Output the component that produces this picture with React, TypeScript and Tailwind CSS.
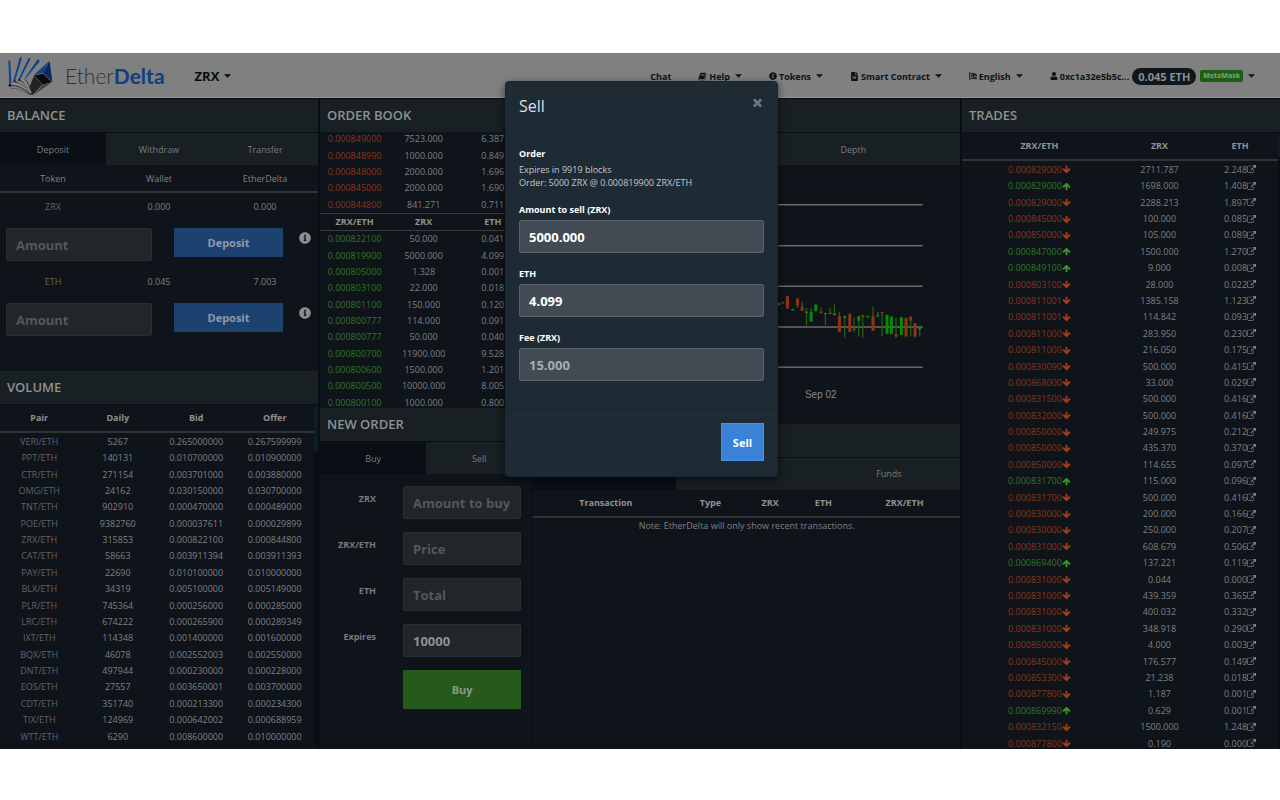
import { FaFileAlt, FaInfoCircle, FaUser } from "react-icons/fa";

type IconProps = { d: string; className?: string };
function Icon({ d, className = "" }: IconProps) {
  return (
    <svg viewBox="0 0 1792 1792" className={`inline-block fill-current ${className}`} aria-hidden="true">
      <path d={d} />
    </svg>
  );
}

const ARROW =
  "M1675 832q0 53-37 90l-651 652q-39 37-91 37-53 0-90-37l-651-652q-38-36-38-90 0-53 38-91l74-75q39-37 91-37 53 0 90 37l294 294v-704q0-52 38-90t90-38h128q52 0 90 38t38 90v704l294-294q37-37 90-37 52 0 91 37l75 75q37 39 37 91z";
const EXTERNAL =
  "M1408 928v320q0 119-84.5 203.5t-203.5 84.5h-832q-119 0-203.5-84.5t-84.5-203.5v-832q0-119 84.5-203.5t203.5-84.5h704q14 0 23 9t9 23v64q0 14-9 23t-23 9h-704q-66 0-113 47t-47 113v832q0 66 47 113t113 47h832q66 0 113-47t47-113v-320q0-14 9-23t23-9h64q14 0 23 9t9 23zM1792 64v512q0 26-19 45t-45 19-45-19l-176-176-652 652q-10 10-23 10t-23-10l-114-114q-10-10-10-23t10-23l652-652-176-176q-19-19-19-45t19-45 45-19h512q26 0 45 19t19 45z";
const TIMES =
  "M1490 1322q0 40-28 68l-136 136q-28 28-68 28t-68-28l-294-294-294 294q-28 28-68 28t-68-28l-136-136q-28-28-28-68t28-68l294-294-294-294q-28-28-28-68t28-68l136-136q28-28 68-28t68 28l294 294 294-294q28-28 68-28t68 28l136 136q28 28 28 68t-28 68l-294 294 294 294q28 28 28 68z";
const BOOK =
  "M1703 478q40 57 18 129l-275 906q-19 64-76.5 107.5t-122.5 43.5h-923q-77 0-148.5-53.5t-99.5-131.5q-24-67-2-127 0-4 3-27t4-37q1-8-3-21.5t-3-19.5q2-11 8-21t16.5-23.5 16.5-23.5q23-38 45-91.5t30-91.5q3-10 .5-30t-.5-28q3-11 17-28t17-23q21-36 42-92t25-90q1-9-2.5-32t.5-28q4-13 22-30.5t22-22.5q19-26 42.5-84.5t27.5-96.5q1-8-3-25.5t-2-26.5q2-8 9-18t18-23 17-21q8-12 16.5-30.5t15-35 16-36 19.5-32 26.5-23.5 36-11.5 47.5 5.5l-1 3q38-9 51-9h761q74 0 114 56t18 130l-274 906q-36 119-71.5 153.5t-128.5 34.5h-869q-27 0-38 15-11 16-1 43 24 70 144 70h923q29 0 56-15.5t35-41.5l300-987q7-22 5-57 38 15 59 43zm-1064 2q-4 13 2 22.5t20 9.5h608q13 0 25.5-9.5t16.5-22.5l21-64q4-13-2-22.5t-20-9.5h-608q-13 0-25.5 9.5t-16.5 22.5zm-83 256q-4 13 2 22.5t20 9.5h608q13 0 25.5-9.5t16.5-22.5l21-64q4-13-2-22.5t-20-9.5h-608q-13 0-25.5 9.5t-16.5 22.5z";

function Caret() {
  return (
    <svg viewBox="0 0 8 4" className="ml-[5px] h-1 w-[7px] fill-current" aria-hidden="true">
      <path d="M0 0h8L4 4z" />
    </svg>
  );
}

function LanguageIcon() {
  return (
    <svg viewBox="0 0 20 20" className="mr-[2px] size-2" aria-hidden="true">
      <path d="M1 2l9 3v11l-9 2z" fill="none" stroke="currentColor" strokeWidth="2" />
      <path d="M3 8h5M5.500 6v2M7.500 8q-1 5-4 6M4 10q1 3 4 3" fill="none" stroke="currentColor" strokeWidth="1.400" />
      <path d="M8 2l11 3v14l-9-3V5z" fill="currentColor" />
      <path d="M12 14l2.500-7 2.500 8M13 12l3 .6" fill="none" stroke="#808080" strokeWidth="1.500" />
    </svg>
  );
}

function Logo() {
  return (
    <svg viewBox="0 0 135 117" className="h-[39px] w-[45px]" aria-hidden="true">
      <g fill="#0d4290">
        <path d="M1 9l6 5 3 62-6 8z" />
        <path d="M36 0l6 3-20 65-7 6z" />
        <path d="M62 2l6 3-31 60-7 5z" />
        <path d="M89 7l7 5-40 49-7 5z" />
        <path d="M124 12L78 53l28-5z" />
      </g>
      <path d="M125 12l8 63-27-27z" fill="#08295c" />
      <path d="M78 55l28-5 25 25-27 8z" fill="#0a0b0d" />
      <path d="M78 56l25 27-29 31-10-22z" fill="#232325" />
      <path d="M105 84l26-8-54 38z" fill="#3d3d40" />
      <g fill="none" strokeLinecap="round">
        <g stroke="#2c2c2e" strokeWidth="2.500">
          <path d="M6 86q32-4 62 27" />
          <path d="M20 74q28 4 50 39" />
          <path d="M35 70q22 10 37 43" />
          <path d="M51 67q16 16 22 46" />
        </g>
        <g stroke="#9b9b9b" strokeWidth="3">
          <path d="M17 80q26 4 48 26" />
          <path d="M32 75q20 10 35 32" />
          <path d="M48 75q14 14 21 32" />
        </g>
        <g stroke="#444446" strokeWidth="2">
          <path d="M10 94q26-2 54 18" />
          <path d="M24 85q22 5 42 26" />
          <path d="M40 82q15 10 28 29" />
        </g>
      </g>
      <g fill="#0b0c0e">
        <circle cx="6" cy="85" r="4" />
        <circle cx="20" cy="73" r="3" />
        <circle cx="34" cy="69" r="3" />
      </g>
    </svg>
  );
}

function PanelTitle({ children, label }: { children?: string; label?: string }) {
  return (
    <h2
      aria-label={label}
      className="h-[33px] shrink-0 bg-[#182023] px-[7px] text-[13px] leading-[33px] font-semibold text-[#8e9192] uppercase"
    >
      {children}
    </h2>
  );
}

function Tabs({ items, cols }: { items: { label: string; hidden?: boolean }[]; cols: string }) {
  return (
    <div role="tablist" className={`grid h-[33px] shrink-0 border-t border-[#090e14] ${cols}`}>
      {items.map((t, i) => (
        <button
          key={t.label}
          role="tab"
          aria-label={t.label}
          aria-selected={i === 0}
          className="bg-[#182023] text-center text-[#787b7d] aria-selected:bg-[#090f15]"
        >
          {t.hidden ? null : t.label}
        </button>
      ))}
    </div>
  );
}

const volume = `VERI/ETH 5267 0.265000000 0.267599999
PPT/ETH 140131 0.010700000 0.010900000
CTR/ETH 271154 0.003701000 0.003880000
OMG/ETH 24162 0.030150000 0.030700000
TNT/ETH 902910 0.000470000 0.000489000
POE/ETH 9382760 0.000037611 0.000029899
ZRX/ETH 315853 0.000822100 0.000844800
CAT/ETH 58663 0.003911394 0.003911393
PAY/ETH 22690 0.010100000 0.010000000
BLX/ETH 34319 0.005100000 0.005149000
PLR/ETH 745364 0.000256000 0.000285000
LRC/ETH 674222 0.000265900 0.000289349
IXT/ETH 114348 0.001400000 0.001600000
BQX/ETH 46078 0.002552003 0.002550000
DNT/ETH 497944 0.000230000 0.000228000
EOS/ETH 27557 0.003650001 0.003700000
CDT/ETH 351740 0.000213300 0.000234300
TIX/ETH 124969 0.000642002 0.000688959
WTT/ETH 6290 0.008600000 0.010000000`
  .split("\n")
  .map((r) => r.split(" "));

const asks = [
  ["0.000849000", "7523.000", "6.387"],
  ["0.000848990", "1000.000", "0.849"],
  ["0.000848000", "2000.000", "1.696"],
  ["0.000845000", "2000.000", "1.690"],
  ["0.000844800", "841.271", "0.711"],
];
const bids = [
  ["0.000822100", "50.000", "0.041"],
  ["0.000819900", "5000.000", "4.099"],
  ["0.000805000", "1.328", "0.001"],
  ["0.000803100", "22.000", "0.018"],
  ["0.000801100", "150.000", "0.120"],
  ["0.000800777", "114.000", "0.091"],
  ["0.000800777", "50.000", "0.040"],
  ["0.000800700", "11900.000", "9.528"],
  ["0.000800600", "1500.000", "1.201"],
  ["0.000800500", "10000.000", "8.005"],
  ["0.000800100", "1000.000", "0.800"],
];

const trades = `0.000829000 d 2711.787 2.248
0.000829000 u 1698.000 1.408
0.000829000 d 2288.213 1.897
0.000845000 d 100.000 0.085
0.000850000 d 105.000 0.089
0.000847000 u 1500.000 1.270
0.000849100 u 9.000 0.008
0.000803100 d 28.000 0.022
0.000811001 d 1385.158 1.123
0.000811001 d 114.842 0.093
0.000811000 d 283.950 0.230
0.000811000 d 216.050 0.175
0.000830090 d 500.000 0.415
0.000868000 d 33.000 0.029
0.000831500 d 500.000 0.416
0.000832000 d 500.000 0.416
0.000850000 d 249.975 0.212
0.000850000 d 435.370 0.370
0.000850000 d 114.655 0.097
0.000831700 u 115.000 0.096
0.000831700 d 500.000 0.416
0.000830000 d 200.000 0.166
0.000830000 d 250.000 0.207
0.000831000 d 608.679 0.506
0.000869400 u 137.221 0.119
0.000831000 d 0.044 0.000
0.000831000 d 439.359 0.365
0.000831000 d 400.032 0.332
0.000831000 d 348.918 0.290
0.000850000 d 4.000 0.003
0.000845000 d 176.577 0.149
0.000853300 d 21.238 0.018
0.000877800 d 1.187 0.001
0.000869990 u 0.629 0.001
0.000832150 d 1500.000 1.248
0.000877800 d 0.190 0.000`
  .split("\n")
  .map((r) => r.split(" "));

// x, wick top, wick bottom, body top, body bottom, rising
const candles: [number, number, number, number, number, boolean][] = [
  [447, 189, 196, 189, 196, true],
  [459, 186, 191, 186, 191, false],
  [473, 169, 206, 169, 206, false],
  [489, 207, 212, 207, 212, true],
  [503, 176, 204, 176, 197, false],
  [517, 186, 213, 200, 213, false],
  [530, 204, 257, 215, 220, true],
  [544, 204, 245, 216, 245, true],
  [558, 194, 214, 194, 214, true],
  [574, 203, 220, 215, 220, false],
  [587, 219, 256, 219, 223, true],
  [601, 204, 223, 218, 223, false],
  [614, 194, 226, 220, 226, true],
  [629, 216, 276, 229, 276, false],
  [645, 226, 294, 229, 234, true],
  [660, 219, 276, 223, 276, false],
  [673, 233, 276, 266, 270, true],
  [687, 227, 290, 229, 243, true],
  [699, 226, 294, 226, 231, false],
  [714, 228, 232, 228, 232, true],
  [730, 200, 273, 229, 273, false],
  [744, 216, 230, 226, 230, true],
  [757, 218, 290, 216, 220, false],
  [772, 225, 282, 225, 282, true],
  [785, 230, 282, 230, 282, true],
  [799, 233, 294, 282, 290, false],
  [815, 232, 285, 232, 285, true],
  [829, 234, 290, 234, 290, false],
  [843, 236, 290, 230, 243, false],
  [856, 250, 294, 250, 290, false],
  [870, 264, 290, 264, 269, true],
];

function Chart() {
  return (
    <svg viewBox="0 0 427 259" className="block w-full" role="img" aria-label="Price chart">
      {[39, 80, 120.6, 161.4, 201.6].map((y) => (
        <rect key={y} x="20" y={y} width="370" height="1.500" fill="#6a6b6d" />
      ))}
      <g transform="translate(97 75) scale(.33333)">
        {candles.map(([x, wt, wb, bt, bb, up]) => (
          <g key={x}>
            <rect x={x - 2} y={wt} width="4" height={wb - wt} fill="#285a18" />
            <rect x={x - 4.5} y={bt} width="9" height={bb - bt} fill={up ? "#068c06" : "#8e3414"} />
          </g>
        ))}
      </g>
      <text x="288" y="233" textAnchor="middle" fontSize="10" fill="#858789" fontFamily="Liberation Sans, sans-serif">
        Sep 02
      </text>
    </svg>
  );
}

const field =
  "h-[33px] w-full rounded-[2px] border border-[#2b3033] bg-[#21262a] px-[9px] text-[13px] font-bold text-[#8f9193] placeholder:text-[#54585b]";
const modalField =
  "h-[33px] w-full rounded-[2px] border border-[#59626a] bg-[#424b53] px-[9px] text-[13px] font-bold text-white disabled:text-[#a9adb1]";
const headRow = "border-b-2 border-[#303234] text-[#8e9192]";

function Balance({ token, wallet, delta }: { token: string; wallet: string; delta: string }) {
  return (
    <div className="h-[75px]">
      <div className="grid h-[26px] grid-cols-3 items-center text-center">
        <span className="text-[#606365]">{token}</span>
        <span>{wallet}</span>
        <span>{delta}</span>
      </div>
      <div className="mt-[9px] flex items-start pl-[6px]">
        <div className="w-[146px]">
          <input aria-label={`${token} amount`} placeholder="Amount" className={field} />
        </div>
        <button className="ml-[22px] h-[29px] w-[109px] bg-[#1c4272] text-[11px] font-bold text-[#8f9aa8]">
          Deposit
        </button>
        <FaInfoCircle className="mt-1 ml-4 size-3 text-[#8b8d8f]" />
      </div>
    </div>
  );
}

function BookRows({ rows, tone }: { rows: string[][]; tone: string }) {
  return (
    <tbody>
      {rows.map((r, i) => (
        <tr key={i}>
          <td className={tone}>{r[0]}</td>
          <td>{r[1]}</td>
          <td>{r[2]}</td>
        </tr>
      ))}
    </tbody>
  );
}

function OrderField({ id, label, placeholder, value }: { id: string; label: string; placeholder?: string; value?: string }) {
  return (
    <div className="flex h-[33px] gap-[27px]">
      <label htmlFor={id} className="mt-[6px] w-14 shrink-0 text-right font-bold text-[#77797b]">
        {label}
      </label>
      <input id={id} placeholder={placeholder} defaultValue={value} className={field} />
    </div>
  );
}

function ModalField({ id, label, value, disabled }: { id: string; label: string; value: string; disabled?: boolean }) {
  return (
    <div className="mt-[14px]">
      <label htmlFor={id} className="mb-1 block font-bold text-white">
        {label}
      </label>
      <input id={id} defaultValue={value} disabled={disabled} className={modalField} />
    </div>
  );
}

const menuItem = "flex items-center";

export default function App() {
  return (
    <div className="flex min-h-screen flex-col bg-white pt-[53px] pb-[51px] font-['Open_Sans','Noto_Sans',sans-serif] text-[9px] leading-[13px] text-[#7e8183]">
      <div className="relative flex grow flex-col bg-[#090e14]">
        <header className="flex h-[45px] shrink-0 items-center border-b border-[#999] bg-[#808080] pt-[2px] pr-[25px] pl-2 text-[#0d1318]">
          <a href="#" className="flex items-center gap-3">
            <Logo />
            <span className="font-['Lato','Open_Sans',sans-serif] text-[21px] leading-6 font-light text-[#2f3133]">
              Ether<b className="font-bold text-[#0f3d80]">Delta</b>
            </span>
          </a>
          <button className="ml-[30px] flex items-center text-[13px] font-bold text-[#090b0d]">
            ZRX
            <Caret />
          </button>
          <nav className="ml-auto flex items-center gap-[27px] font-bold">
            <a href="#" className={menuItem}>
              Chat
            </a>
            <button className={menuItem}>
              <Icon d={BOOK} className="mr-[2px] size-[9px]" />
              Help
              <Caret />
            </button>
            <button className={menuItem}>
              <FaInfoCircle className="mr-[2px] size-2" />
              Tokens
              <Caret />
            </button>
            <button className={menuItem}>
              <FaFileAlt className="mr-[2px] size-[9px]" />
              Smart Contract
              <Caret />
            </button>
            <button className={menuItem}>
              <LanguageIcon />
              English
              <Caret />
            </button>
            <button className={menuItem}>
              <FaUser className="mr-[2px] size-2" />
              0xc1a32e5b5c...
              <span className="ml-[3px] rounded-full bg-[#0f171d] px-[6px] text-[11px] leading-[17px] text-[#8d8f90]">
                0.045 ETH
              </span>
              <span className="ml-1 rounded-[2px] bg-[#1c5f10] px-[3px] text-[7px] leading-3 text-[#84a07e]">
                MetaMask
              </span>
              <Caret />
            </button>
          </nav>
        </header>

        <main className="mt-px grid grow grid-cols-4">
          <div className="mr-[2px] flex flex-col bg-[#0f141b]">
            <PanelTitle>Balance</PanelTitle>
            <Tabs
              cols="grid-cols-3"
              items={[{ label: "Deposit" }, { label: "Withdraw" }, { label: "Transfer" }]}
            />
            <div className="grid h-7 grid-cols-3 items-center border-b-2 border-[#303234] text-center">
              <span>Token</span>
              <span>Wallet</span>
              <span>EtherDelta</span>
            </div>
            <Balance token="ZRX" wallet="0.000" delta="0.000" />
            <Balance token="ETH" wallet="0.045" delta="7.003" />
            <div className="mt-7">
              <PanelTitle>Volume</PanelTitle>
            </div>
            <div className="flex border-t border-[#090e14]">
              <div className="min-w-0 grow">
                <table className="h-[340px] w-full table-fixed text-center leading-[10px]">
                  <thead>
                    <tr className={`${headRow} h-[27px]`}>
                      <th className="font-bold">Pair</th>
                      <th className="font-bold">Daily</th>
                      <th className="font-bold">Bid</th>
                      <th className="font-bold">Offer</th>
                    </tr>
                  </thead>
                  <tbody>
                    {volume.map((r) => (
                      <tr key={r[0]}>
                        <td className="text-[#606365]">{r[0]}</td>
                        <td>{r[1]}</td>
                        <td>{r[2]}</td>
                        <td>{r[3]}</td>
                      </tr>
                    ))}
                  </tbody>
                </table>
              </div>
              <div className="w-1 shrink-0 bg-[#090e14]">
                <div className="h-[47px] bg-[#0e1c24]" />
              </div>
            </div>
          </div>

          <div className="col-span-2 grid grid-cols-3">
            <div className="flex flex-col border-r border-[#090e14] bg-[#0f141b]">
              <PanelTitle>Order Book</PanelTitle>
              <div className="flex h-[276px] flex-col overflow-hidden pr-[5px] leading-[10px]">
                <div className="flex h-[81px] shrink-0 items-end overflow-hidden">
                  <table className="h-[82px] w-full shrink-0 table-fixed text-center">
                    <BookRows rows={asks} tone="text-[#84361b]" />
                  </table>
                </div>
                <table className="h-[198px] w-full shrink-0 table-fixed text-center">
                  <thead>
                    <tr className="h-[17px] border-y border-[#3a3b3d] text-[#8e9192]">
                      <th className="font-bold">ZRX/ETH</th>
                      <th className="font-bold">ZRX</th>
                      <th className="font-bold">ETH</th>
                    </tr>
                  </thead>
                  <BookRows rows={bids} tone="text-[#317526]" />
                </table>
              </div>
              <PanelTitle>New Order</PanelTitle>
              <Tabs cols="grid-cols-2" items={[{ label: "Buy" }, { label: "Sell" }]} />
              <form className="flex flex-col gap-[13px] pt-3 pr-[11px]">
                <OrderField id="buy-amount" label="ZRX" placeholder="Amount to buy" />
                <OrderField id="buy-price" label="ZRX/ETH" placeholder="Price" />
                <OrderField id="buy-total" label="ETH" placeholder="Total" />
                <OrderField id="buy-expires" label="Expires" value="10000" />
                <button
                  type="button"
                  className="ml-[83px] h-[39px] bg-[#265a1b] text-[11px] font-bold text-[#8b9a87]"
                >
                  Buy
                </button>
              </form>
            </div>

            <div className="col-span-2 flex flex-col bg-[#0f141b]">
              <PanelTitle label="Price chart" />
              <Tabs cols="grid-cols-2" items={[{ label: "Price", hidden: true }, { label: "Depth" }]} />
              <Chart />
              <PanelTitle label="My transactions" />
              <Tabs
                cols="grid-cols-3"
                items={[
                  { label: "Trades", hidden: true },
                  { label: "Orders", hidden: true },
                  { label: "Funds" },
                ]}
              />
              <table className="w-full table-fixed text-center">
                <thead>
                  <tr className={`${headRow} h-[27px]`}>
                    <th className="w-[34%] font-bold">Transaction</th>
                    <th className="w-[15%] font-bold">Type</th>
                    <th className="w-[13%] font-bold">ZRX</th>
                    <th className="w-[12%] font-bold">ETH</th>
                    <th className="font-bold">ZRX/ETH</th>
                  </tr>
                </thead>
                <tbody>
                  <tr className="h-4">
                    <td colSpan={5}>Note: EtherDelta will only show recent transactions.</td>
                  </tr>
                </tbody>
              </table>
            </div>
          </div>

          <div className="ml-[2px] flex flex-col bg-[#0f141b]">
            <PanelTitle>Trades</PanelTitle>
            <div className="flex h-[617px] overflow-hidden border-t border-[#090e14]">
              <div className="min-w-0 grow">
                <table className="h-[619px] w-full table-fixed text-center leading-[10px]">
                  <thead>
                    <tr className={`${headRow} h-[27px]`}>
                      <th className="w-[49%] font-bold">ZRX/ETH</th>
                      <th className="w-[27%] font-bold">ZRX</th>
                      <th className="font-bold">ETH</th>
                    </tr>
                  </thead>
                  <tbody>
                    {trades.map(([price, dir, amount, eth], i) => (
                      <tr key={i}>
                        <td>
                          <span
                            className={`flex items-center justify-center ${dir === "u" ? "text-[#317526]" : "text-[#84361b]"}`}
                          >
                            {price}
                            <Icon d={ARROW} className={dir === "u" ? "size-[9px] rotate-180 text-[#389428]" : "size-[9px] text-[#a33d17]"} />
                          </span>
                        </td>
                        <td>{amount}</td>
                        <td>
                          <span className="flex items-center justify-center">
                            {eth}
                            <Icon d={EXTERNAL} className="size-[9px]" />
                          </span>
                        </td>
                      </tr>
                    ))}
                  </tbody>
                </table>
              </div>
              <div className="w-[2px] shrink-0 bg-[#090e14]">
                <div className="h-6 bg-[#0e1c24]" />
              </div>
            </div>
          </div>
        </main>

        <div className="absolute inset-0 flex items-start justify-center pt-7 pl-[3px]">
          <div
            role="dialog"
            aria-labelledby="sell-title"
            className="w-[273px] rounded-[4px] border border-[#1a252d] bg-[#1f2b34] text-[#c3c7ca] shadow-[0_3px_9px_rgba(0,0,0,0.6)]"
          >
            <div className="flex h-[51px] items-center justify-between border-b border-[#19242b] px-[13px] pb-[2px]">
              <h3 id="sell-title" className="text-[16px] leading-6 text-[#dcdfe1]">
                Sell
              </h3>
              <button aria-label="Close" className="mb-2">
                <Icon d={TIMES} className="block size-[13px] text-[#6c757c]" />
              </button>
            </div>
            <form className="px-[13px] pt-[14px] pb-[27px]">
              <p className="mb-[3px] font-bold text-white">Order</p>
              <p>Expires in 9919 blocks</p>
              <p>Order: 5000 ZRX @ 0.000819900 ZRX/ETH</p>
              <ModalField id="sell-amount" label="Amount to sell (ZRX)" value="5000.000" />
              <ModalField id="sell-eth" label="ETH" value="4.099" />
              <ModalField id="sell-fee" label="Fee (ZRX)" value="15.000" disabled />
            </form>
            <div className="flex justify-end border-t border-[#19242b] px-[13px] pt-[14px] pb-[15px]">
              <button className="h-[38px] w-[43px] border border-[#4790e2] bg-[#3a82d8] text-[11px] font-bold text-white">
                Sell
              </button>
            </div>
          </div>
        </div>
      </div>
    </div>
  );
}
